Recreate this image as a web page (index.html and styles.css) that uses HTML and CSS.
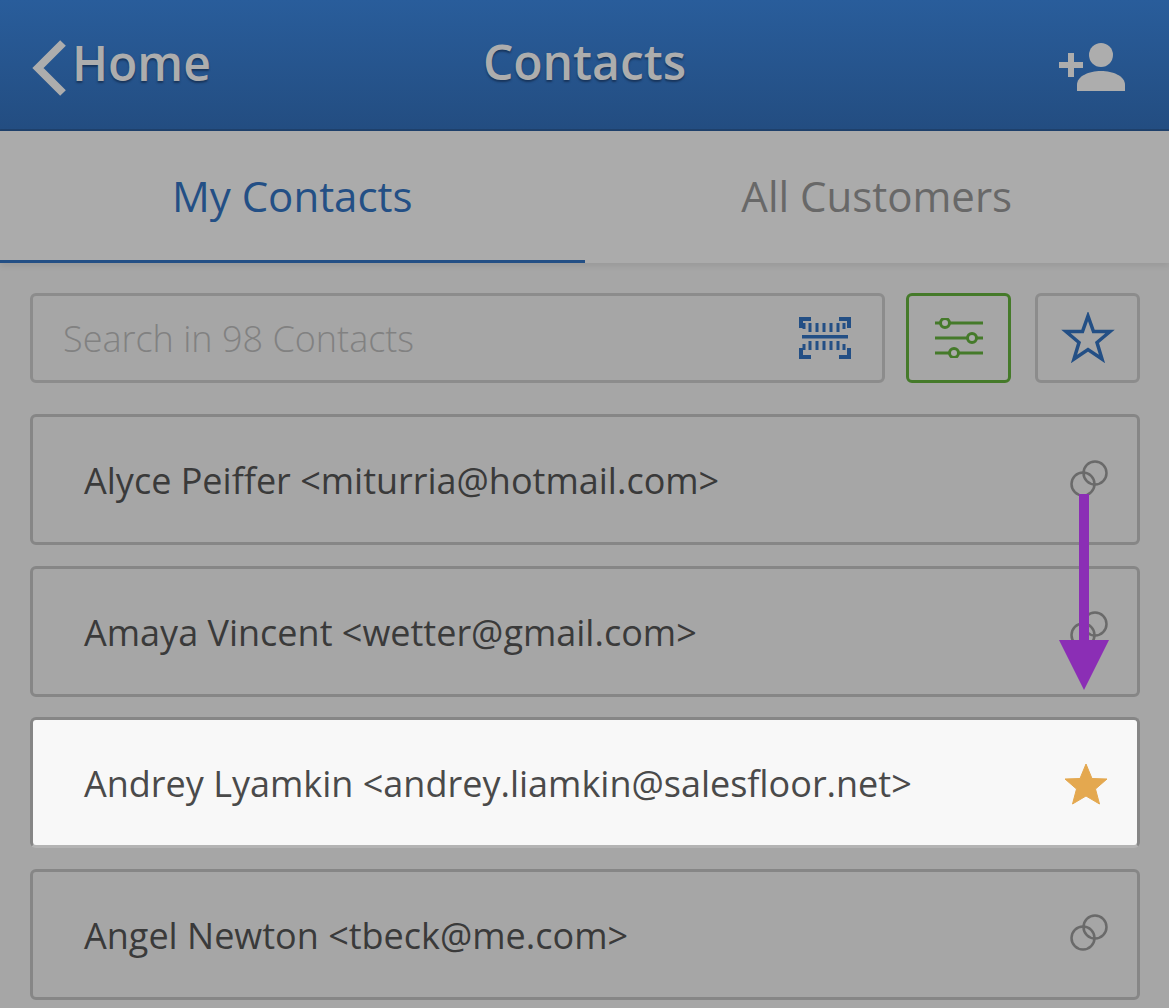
FILE: index.html
```html
<!DOCTYPE html>
<html lang="en">

<head>
    <meta charset="UTF-8">
    <title>Contacts</title>
    <link rel="stylesheet" href="styles.css">
</head>

<body>
    <div id="app">
        <div class="header">
            <a class="back">
                <svg class="back-icon" width="36" height="58" viewBox="0 0 36 58"><path d="M31 4 L6 29 L31 54" fill="none" stroke="#adadad" stroke-width="8"/></svg>
                <span>Home</span>
            </a>
            <div class="title">Contacts</div>
            <svg class="add-icon" width="68" height="50" viewBox="0 0 68 50">
                <rect x="0" y="19" width="24" height="6" fill="#adadad"/>
                <rect x="9" y="10" width="6" height="24" fill="#adadad"/>
                <circle cx="42" cy="12" r="12" fill="#adadad"/>
                <path d="M18 48 V42 C18 33 30 28 42 28 C54 28 66 33 66 42 V48 Z" fill="#adadad"/>
            </svg>
        </div>
        <div class="tabs">
            <div class="tab active">My Contacts</div>
            <div class="tab">All Customers</div>
        </div>
        <div class="content">
            <div class="search-row">
                <div class="search">
                    <span>Search in 98 Contacts</span>
                    <svg width="52" height="42" viewBox="0 0 52 42">
                        <path d="M12 2 H2 V11 M40 2 H50 V11 M12 40 H2 V31 M40 40 H50 V31" fill="none" stroke="#234f85" stroke-width="4"/>
                        <rect x="3" y="18" width="46" height="3.500" fill="#234f85"/>
                        <path d="M11 6 V15 M18 6 V15 M25 6 V15 M32 6 V15 M39 6 V15 M11 24 V33 M18 24 V33 M25 24 V33 M32 24 V33 M39 24 V33 M5 6 V12 M45 6 V12 M5 27 V33 M45 27 V33" fill="none" stroke="#234f85" stroke-width="3"/>
                    </svg>
                </div>
                <div class="icon-btn filter">
                    <svg width="48" height="40" viewBox="0 0 48 40">
                        <path d="M0 5 H48 M0 20 H48 M0 35 H48" stroke="#457a2a" stroke-width="3"/>
                        <circle cx="10" cy="5" r="4.500" fill="#ababab" stroke="#457a2a" stroke-width="3"/>
                        <circle cx="37" cy="20" r="4.500" fill="#ababab" stroke="#457a2a" stroke-width="3"/>
                        <circle cx="19" cy="35" r="4.500" fill="#ababab" stroke="#457a2a" stroke-width="3"/>
                    </svg>
                </div>
                <div class="icon-btn">
                    <svg width="54" height="52" viewBox="0 0 54 52"><path d="M27 4 L32.500 19.500 L49 19.500 L36 30.500 L41 47 L27 37.500 L13 47 L18 30.500 L5 19.500 L21.500 19.500 Z" fill="none" stroke="#234f85" stroke-width="3.500"/></svg>
                </div>
            </div>
            <div class="row">
                <span>Alyce Peiffer &lt;miturria@hotmail.com&gt;</span>
                <svg class="rings" width="38" height="38" viewBox="0 0 38 38"><circle cx="13" cy="24" r="11.500"/><circle cx="25" cy="13" r="11.500"/></svg>
            </div>
            <div class="row">
                <span>Amaya Vincent &lt;wetter@gmail.com&gt;</span>
                <svg class="rings" width="38" height="38" viewBox="0 0 38 38"><circle cx="13" cy="24" r="11.500"/><circle cx="25" cy="13" r="11.500"/></svg>
            </div>
            <div class="row selected">
                <span>Andrey Lyamkin &lt;andrey.liamkin@salesfloor.net&gt;</span>
                <svg class="gold-star" width="44" height="42" viewBox="0 0 44 42"><path d="M22 1 L28 15.500 L43 16 L31.500 26 L35.500 41 L22 33 L8.500 41 L12.500 26 L1 16 L16 15.500 Z" fill="#e4a84f" stroke="#e4a84f" stroke-linejoin="round"/></svg>
            </div>
            <div class="row">
                <span>Angel Newton &lt;tbeck@me.com&gt;</span>
                <svg class="rings" width="38" height="38" viewBox="0 0 38 38"><circle cx="13" cy="24" r="11.500"/><circle cx="25" cy="13" r="11.500"/></svg>
            </div>
        </div>
        <svg class="arrow" width="50" height="196" viewBox="0 0 50 196"><path d="M20 0 H30 V146 H50 L25 196 L0 146 H20 Z" fill="#8b2eb5"/></svg>
    </div>
</body>

</html>
```

FILE: styles.css
```css
html * {
    padding: 0;
    margin: 0;
    border: 0;
    box-sizing: border-box;
}

body {
    background: #a6a6a6;
    font-family: "Open Sans", "Noto Sans", sans-serif;
    overflow: hidden;
}

#app {
    position: relative;
    height: 1008px;
}

.header {
    height: 131px;
    display: flex;
    align-items: center;
    justify-content: space-between;
    padding: 7px 42px 0 32px;
    background: linear-gradient(#295d9b, #234d81);
    border-bottom: 2px solid #1f416c;
    color: #adadad;
    font-size: 48px;
    font-weight: 600;
    text-shadow: 0 2px 2px rgba(20, 45, 80, .8);
}

.back {
    display: flex;
    align-items: center;
    gap: 4px;
}

.back span {
    margin-top: -12px;
}

.title {
    position: absolute;
    left: 0;
    right: 0;
    top: 29px;
    text-align: center;
}

.tabs {
    display: flex;
    height: 132px;
    background: #ababab;
    box-shadow: 0 3px 6px rgba(0, 0, 0, .08);
}

.tab {
    flex: 1;
    display: flex;
    align-items: center;
    justify-content: center;
    color: #686868;
    font-size: 42px;
    padding-bottom: 3px;
}

.tab.active {
    color: #234f85;
    padding-bottom: 0;
    border-bottom: 3px solid #234f85;
}

.content {
    padding: 30px 29px 0 30px;
}

.search-row {
    display: flex;
    height: 90px;
    gap: 21px;
    margin-bottom: 31px;
}

.search {
    flex: 1;
    display: flex;
    align-items: center;
    justify-content: space-between;
    padding: 0 31px 0 30px;
    border: 3px solid #8c8c8c;
    border-radius: 6px;
    color: #818181;
    font-size: 36px;
    font-weight: 300;
}

.icon-btn {
    width: 105px;
    display: flex;
    align-items: center;
    justify-content: center;
    border: 3px solid #8c8c8c;
    border-radius: 6px;
}

.filter {
    border-color: #457a2a;
    margin-right: 3px;
}

.row {
    height: 131px;
    margin-bottom: 20.670px;
    display: flex;
    align-items: center;
    justify-content: space-between;
    padding: 0 30px 0 51px;
    border: 3px solid #868686;
    border-radius: 6px;
    color: #3a3a3a;
    font-size: 36px;
}

.row span {
    margin-top: 2px;
}

.selected {
    background: #f8f8f8;
    color: #4a4a4a;
    border-bottom-color: #b4b4b4;
}

.rings {
    margin-top: -2px;
    margin-right: -1px;
}

.rings circle {
    fill: none;
    stroke: #6a6a6a;
    stroke-width: 2.500;
}

.gold-star {
    margin-top: 2px;
    margin-right: -1px;
}

.arrow {
    position: absolute;
    left: 1059px;
    top: 494px;
}
```
